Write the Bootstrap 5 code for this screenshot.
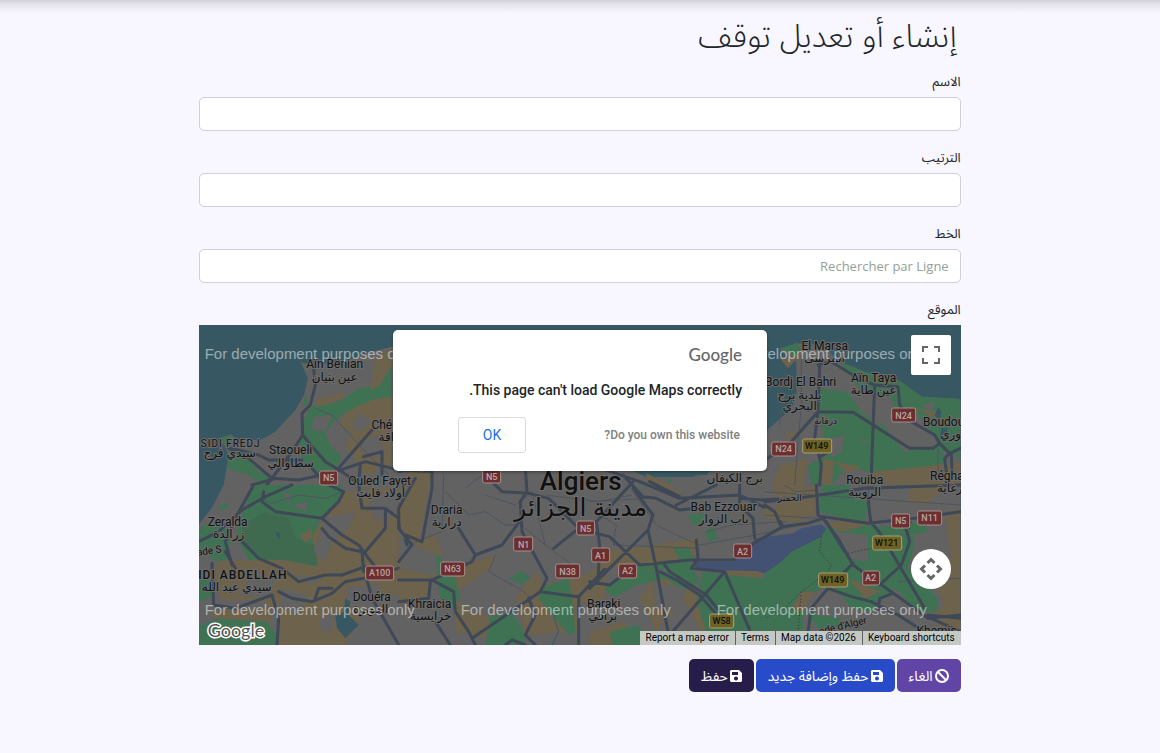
<!DOCTYPE html>
<html lang="ar" dir="rtl">
<head>
<meta charset="utf-8">
<meta name="viewport" content="width=device-width, initial-scale=1">
<title>إنشاء أو تعديل توقف</title>
<link rel="stylesheet" href="https://cdn.jsdelivr.net/npm/bootstrap@5.3.0/dist/css/bootstrap.min.css">
<style>
body{background:#f8f7ff;color:#212529;font-family:"Open Sans","Noto Sans Arabic","DejaVu Sans",sans-serif;font-size:14px;line-height:20px}
.top-shade{height:13px;background:linear-gradient(#d4d3db,#e6e5ed 40%,#f8f7ff)}
.form-row{--bs-gutter-x:12px}
.page-title{font-size:32px;font-weight:300;line-height:44px;margin:0 0 14px;padding:0 4px}
.form-label{display:block;font-size:13px;line-height:20px;margin-bottom:6px}
.form-control{height:34px;font-size:13px;border-color:#ced0dc;border-radius:5px;padding:4px 11px}
.form-control::placeholder{color:#95a099;opacity:1}
.field{margin-bottom:16px}
.map-box{height:320px;background:#375862;font-family:Roboto,"DejaVu Sans",sans-serif}
.map-art{display:block;direction:ltr}
.map-art text{text-anchor:middle}
.town{font-size:12px;fill:#111;stroke:#6c6c6c;stroke-width:2px;paint-order:stroke}
.town-ar{font-size:12px}
.wmark{font:15px "Liberation Sans",sans-serif;fill:#fff;fill-opacity:.5}
.map-art .wmark text,.map-art .logo{text-anchor:start}
.sign rect{stroke:#a98f8f;stroke-width:1;fill:#6b2f30}
.sign text{font-size:9px;font-weight:500;fill:#b9a5a5}
.sign.wil rect{fill:#6e6224;stroke:#a8a07a}
.sign.wil text{fill:#111}
.grn{fill:#3f7253}.dgr{fill:#3f6a50}.brn{fill:#6d624b}.gry{fill:#626262}.sea{fill:#375862}.lake{fill:#435272}
.road{fill:none;stroke:#3f4856;stroke-width:9;stroke-linejoin:round;stroke-linecap:round}
.thin{fill:none;stroke:#4c545f;stroke-width:3;stroke-linejoin:round}
.thin.river{stroke:#355966}
.dots{fill:none;stroke:#383c3c;stroke-width:3;stroke-dasharray:4 6}
.map-alert{width:374px;max-width:96%;height:141px;top:5px;background:#fff;border-radius:5px;padding:14px 25px 16px 65px;box-shadow:0 1px 3px #0006}
.g-logo{font:500 17px/22px Lato,sans-serif;color:#666}
.alert-msg{font-size:14px;font-weight:500;line-height:20px;margin:14px 0 17px;white-space:nowrap}
.own-link{font-size:12px;font-weight:500;color:#808080;padding-right:2px}
.ok-btn{width:68px;height:36px;border:1px solid #dadce0;border-radius:3px;background:#fff;color:#1a73e8;font-size:14px}
.map-ctl{width:40px;height:40px;left:auto;right:10px;background:#fff;border:0}
.ctl-full{top:10px;border-radius:2px}
.ctl-pan{top:224px}
.credits{right:0;bottom:0;direction:ltr;font-size:10px;line-height:14px}
.credits>*{background:#c4c9c4;color:#000;padding:0 6px 0 5px;margin-left:1px}
.actions{gap:2px;margin-top:14px}
.actions .btn{height:33px;font-size:14px;line-height:20px;padding:0 12px;border:0;border-radius:5px;color:#fff;display:flex;align-items:center;gap:2px}
.b-cancel{background:#6045a6!important}.b-more{background:#284bca!important}.b-save{background:#271d4b!important}
</style>
</head>
<body>
<div class="top-shade"></div>
<main class="container-fluid p-0 overflow-hidden pb-5">
<form class="row form-row justify-content-center m-0" onsubmit="return false"><div class="col-8">
<h1 class="page-title">إنشاء أو تعديل توقف</h1>
<div class="field"><label class="form-label" for="name">الاسم</label><input class="form-control" id="name"></div>
<div class="field"><label class="form-label" for="order">الترتيب</label><input class="form-control" id="order"></div>
<div class="field"><label class="form-label" for="line">الخط</label><input class="form-control" id="line" placeholder="Rechercher par Ligne"></div>
<div class="form-label" id="loc">الموقع</div>
<div class="map-box position-relative overflow-hidden" role="group" aria-labelledby="loc">
<svg class="map-art w-100 h-100" viewBox="0 0 762 320" preserveAspectRatio="xMidYMid slice">
<g transform="scale(.33333)">
<!-- land -->
<path class="gry" d="M0 598 40 548 75 480 88 400 84 375 62 340 98 328 115 345 185 345 230 320 290 255 316 210 328 160 306 112 340 120 440 110 500 85 580 65 800 100 1000 300 1343 456 1480 456 1560 430 1700 320 1780 250 1793 200 1793 110 1740 75 1793 55 1870 60 1925 110 2000 140 2100 165 2170 215 2286 222V960H0Z"/>
<!-- north west -->
<path class="grn" d="M580 115 580 215 520 225 440 262 400 295 380 325 395 360 430 400 400 440 350 445 320 420 300 370 310 310 320 270 345 240 380 240 430 225 480 190 530 180 545 130ZM320 205 330 235 312 250ZM62 340 98 328 105 345 85 370ZM88 400 130 370 180 440 230 460 190 480 150 450 84 430Z"/>
<path class="brn" d="M530 105 580 65 580 120 545 180 515 195ZM350 225 430 200 440 215 400 235 355 245ZM520 225 580 215 580 430 540 420 520 455 490 440 460 390 440 370 460 320 420 305 440 262Z"/>
<path class="gry" d="M480 265 520 290 480 320 460 300ZM345 275 400 270 380 320 340 315ZM480 350 540 330 560 390 500 400Z"/>
<path class="thin" d="M350 250 400 270 500 380 570 450"/>
<path class="road" d="M345 130 350 180 335 240 310 265 312 330 345 370 380 410 430 440 470 470M312 330 280 380 220 460 180 510M100 370 180 390 210 405 310 405M90 370 150 400 220 460 300 465 410 440 520 315M225 462 160 480M410 440 500 410 580 430 700 450M495 395 550 380 550 450 M340 430 365 460M480 480 485 415"/>
<!-- south west -->
<g transform="translate(0 480)">
<path class="grn" d="M165 0 430 0 440 60 360 110 340 180 360 240 250 240 150 225 110 150 130 90ZM0 130 40 110 100 140 90 220 60 230 0 200ZM0 270 30 290 40 330 0 355ZM0 420 60 400 200 410 230 440 240 480 0 480ZM265 415 290 420 260 435ZM50 70 95 50 80 75Z"/>
<path class="dgr" d="M130 120 200 80 270 100 290 160 350 180 365 225 320 275 280 250 180 215 135 170Z"/>
<path class="brn" d="M110 225 260 225 360 245 340 150 380 100 440 20 600 0 600 330 520 330 440 480 240 480 240 380 180 345 70 345 40 280 60 230ZM305 150 340 130 340 160 320 175ZM30 380 220 370 220 410 50 400Z"/>
<path class="gry" d="M380 95 470 80 450 130 400 170 380 230 345 200ZM510 50 560 20 600 30 600 90 530 110ZM250 310 330 330 300 390 240 370ZM440 310 540 295 540 380 450 360ZM170 260 230 280 210 340 120 330ZM290 270 370 280 340 300ZM360 410 410 370 400 440 370 440ZM250 20 280 30 270 55ZM280 60 330 50 320 80Z"/>
<path class="sea" d="M440 340 455 350 450 390 480 420 440 460 415 430 410 395 435 380ZM230 140 245 145 240 165Z"/>
<path class="thin" d="M190 40 220 55 300 30 380 40 430 20"/>
<path class="road" d="M280 0 200 35 130 75 60 140 0 170M165 0 115 90 80 170 100 240M195 20 190 50 230 80 370 100 430 150 480 180 540 260 M370 100 420 50 435 20 390 0M370 130 390 155 440 190 490 200 495 260M130 170 180 220 250 250 300 290 380 270 430 270 500 245M240 320 280 340 340 350 400 325 440 290 495 280M40 235 45 360 110 370 220 330 240 400 235 480M80 200 110 250M350 340 360 310 400 310 M505 285 520 340 600 480M480 0 490 70 560 70 560 130 500 200M560 70 600 100 625 180M600 250 540 265"/>
</g>
<!-- centre -->
<g transform="translate(600 420)">
<path class="brn" d="M30 20 100 25 60 240 10 220 0 130ZM60 220 110 205 135 275 50 245ZM0 310 100 330 200 300 290 270 285 300 220 350 180 375 120 360 100 330 85 400 0 420ZM170 400 220 440 280 460 260 520 170 500ZM350 400 410 320 440 360 560 330 620 290 620 400 540 420 540 500 380 510Z"/>
<path class="grn" d="M112 270 130 280 130 320 170 340 185 400 160 430 125 400 115 340ZM330 340 370 318 395 340 370 358ZM425 370 510 340 520 400 530 500 510 510 460 450 420 400ZM275 455 340 440 385 520 370 540 260 540Z"/>
<path class="thin" d="M135 30 130 200 30 240M140 80 210 150 260 140 320 180 350 180M200 70 250 30M290 270 270 320 360 370 400 400M260 90 350 120 400 80 440 240 520 300M380 190 440 240M440 90 600 110 700 90"/>
<path class="road" d="M0 20 50 10 100 20 100 70 70 230 20 210M50 40 0 130 0 190 40 240 0 290M280 50 310 80 390 85 450 100 540 190 465 250M380 10 385 80 365 110 370 200 445 340 425 380 220 520M370 160 310 240 230 270 220 290 100 345 0 345M180 190 230 270M95 350 90 400 0 410M100 345 165 380 170 440 210 500 230 540M110 470 155 540M425 380 540 395 620 310M390 400 410 450 380 510 410 540M540 395 540 540M320 540 340 525 380 540"/>
<path class="thin river" d="M490 430 465 455 480 500 460 540"/>
</g>
<!-- centre east -->
<g transform="translate(1173 420)">
<path class="sea" d="M170 0H380L350 30 240 32Z"/>
<path class="brn" d="M170 25 240 60 290 90 170 50ZM555 60 600 0 640 0 640 170 590 170 550 90ZM40 260 330 220 310 290 150 300 40 310ZM200 330 330 370 400 450 340 510 280 400 200 500 150 400ZM400 310 530 320 510 340 410 340ZM0 500 100 470 150 540 0 540Z"/>
<path class="grn" d="M45 370 150 300 300 290 330 350 280 380 230 340 140 360 70 400ZM250 250 295 250 315 280 270 285ZM295 150 340 145 340 180 310 180ZM345 200 370 185 385 220 360 230ZM230 40 245 45 240 60ZM340 320 410 330 530 340 640 290 640 540 360 540 320 400ZM60 500 140 480 220 540 70 540Z"/>
<path class="gry" d="M190 350 290 370 270 440 200 430ZM160 320 230 310 240 320Z"/>
<path class="lake" d="M310 290 430 290 500 220 650 200 650 300 540 330 500 318 320 315Z"/>
<path class="thin" d="M130 80 200 180 260 210 330 240 500 210 630 180M30 150 80 180 70 240 330 250M350 200 430 180 590 170M0 110 180 100"/>
<path class="road" d="M20 5 150 50 270 100 450 90 530 130 560 150 580 185 500 230 430 285 300 285 150 300 60 215 0 200M100 30 160 95 200 100 270 135 360 125M260 120 380 60M270 95 180 50M450 60 450 120 490 160 495 220M450 100 520 105 600 100M130 50 20 170 30 240 25 350M190 150 175 195 0 370M175 195 200 310 235 500M0 350 60 360 140 300M320 225 325 280 305 310 405 320 480 495M405 320 240 510M225 300 240 320 350 390 390 440M210 320 260 345 330 390 400 470M130 70 190 150"/>
</g>
<!-- north east -->
<g transform="translate(1698 0)">
<path class="grn" d="M45 70 95 55 110 70 95 95ZM180 60 225 110 300 140 400 165 470 215 587 222V400L520 370 510 330 440 290 400 290 380 220 290 200 240 130ZM160 190 240 200 300 230 420 380 530 360 540 420 440 450 330 450 250 420 210 470 140 480 130 420 190 390 170 300Z"/>
<path class="brn" d="M45 100 105 90 70 130ZM50 420 130 400 120 460 80 480 20 480ZM180 400 210 410 200 480 160 480ZM430 430 587 410 587 480 300 480 320 440ZM210 410 290 425 250 445ZM60 325 120 320 80 350ZM450 250 520 260 510 280Z"/>
<path class="gry" d="M250 200 300 190 380 240 400 290 340 300 290 260ZM200 340 240 330 230 380 200 400ZM470 240 510 230 500 260ZM290 345 310 355 295 360ZM360 250 460 270 510 330 430 320Z"/>
<path class="sea" d="M520 245 530 260 525 290 510 270ZM530 310 548 310 545 340 525 335Z"/>
<path class="thin" d="M110 90 110 240 90 480M60 130 45 300M520 370 520 440"/>
<path class="road" d="M160 120 200 110 280 160 330 180 400 185 405 240 440 290 510 330 525 355 505 370 435 370 265 262 160 260 80 350 10 400M165 120 160 260 150 340 170 420 165 480M330 180 325 310 320 450M525 355 555 385 587 370M555 385 540 400 545 440M560 390 562 440M165 395 195 380"/>
</g>
<!-- south east -->
<g transform="translate(1698 480)">
<path class="grn" d="M170 0 250 0 310 60 300 110 240 100 165 80ZM180 130 210 115 440 130 450 180 430 250 520 340 520 380 460 380 390 310 320 380 260 370 200 300 150 320 100 320 60 370 0 400V260L70 200 160 160ZM370 120 480 110 490 140 440 150ZM120 380 180 360 250 420 170 440Z"/>
<path class="brn" d="M0 70 60 60 100 10 160 0 150 90 90 110 0 100ZM440 0 560 0 480 60 430 50ZM540 80 587 70V480L520 430 500 390 540 360 510 300 560 220ZM180 120 250 100 310 120 230 140ZM110 320 150 320 110 380 80 370ZM250 280 350 320 300 340Z"/>
<path class="gry" d="M210 140 310 150 310 230 250 220ZM320 20 400 20 410 90 330 100ZM190 310 240 340 250 400 150 390 140 340Z"/>
<path class="lake" d="M0 180 60 160 110 130 170 118 185 130 170 155 80 200 50 230 0 265Z"/>
<path class="thin" d="M0 90 160 100M60 0 90 20 160 15M400 290 587 280M310 0 315 110M0 20 587 60"/>
<path class="road" d="M0 50 100 40 300 10 587 0M155 0 160 90 175 100 130 115 50 125 30 80 0 60M175 95 310 115 450 100 587 80M175 100 220 160 265 240 380 320 490 400 587 390M185 110 240 200M310 40 318 110 350 150 480 370M420 120 435 170 410 240 345 300M265 235 190 310 140 370 130 440M190 310 260 335 320 350 400 390 480 440M385 325 345 340 340 380M490 390 587 400M500 400 587 440"/>
<path class="dots" d="M170 155 165 200 200 240 190 260 110 320 60 370 0 400M110 320 100 440M250 205 320 190M440 110 430 150"/>
</g>
</g>
<g class="town">
<text x="136" y="43">Aïn Bénian</text><text class="town-ar" x="136" y="56">عين بنيان</text>
<text x="32" y="122" font-size="10" letter-spacing="1">SIDI FREDJ</text><text class="town-ar" x="31" y="132">سيدي فرج</text>
<text x="92" y="129">Staoueli</text><text class="town-ar" x="92" y="142">سطاوالي</text>
<text x="195" y="104">Chéraga</text><text class="town-ar" x="196" y="116">شراقة</text>
<text x="181" y="160">Ouled Fayet</text><text class="town-ar" x="182" y="172">أولاد فايت</text>
<text x="29" y="201">Zeralda</text><text class="town-ar" x="30" y="213">زرالدة</text>
<text x="11" y="229" font-size="10" transform="rotate(-8 11 229)">ade S</text>
<text x="40" y="254" font-weight="500" letter-spacing="1">SIDI ABDELLAH</text><text class="town-ar" x="38" y="266">سيدي عبد الله</text>
<text x="173" y="276">Douéra</text><text class="town-ar" x="172" y="288">الدويرة</text>
<text x="248" y="189">Draria</text><text class="town-ar" x="248" y="201">درارية</text>
<text x="231" y="283">Khraicia</text><text class="town-ar" x="232" y="295">خرايسية</text>
<text x="405" y="283">Baraki</text><text class="town-ar" x="404" y="295">براقي</text>
<text x="382" y="165" font-size="26" font-weight="500">Algiers</text><text x="382" y="191" font-size="25">مدينة الجزائر</text>
<text class="town-ar" x="536" y="157">برج الكيفان</text>
<text x="525" y="186">Bab Ezzouar</text><text class="town-ar" x="525" y="198">باب الزوار</text>
<text x="626" y="25">El Marsa</text><text class="town-ar" x="626" y="37">المرسى</text>
<text x="602" y="61">Bordj El Bahri</text><text class="town-ar" x="601" y="74">بلدية برج</text><text class="town-ar" x="601" y="85">البحري</text>
<text x="675" y="57">Aïn Taya</text><text class="town-ar" x="675" y="69">عين طاية</text>
<text x="627" y="99" font-size="9">درقانة</text><text x="591" y="176" font-size="9">الحميز</text>
<text x="755" y="101">Boudouaou</text><text class="town-ar" x="764" y="113">بودواوري</text>
<text x="666" y="159">Rouiba</text><text class="town-ar" x="666" y="171">الرويبة</text>
<text x="753" y="155">Réghaïa</text><text class="town-ar" x="751" y="167">رغاية</text>
<text x="645" y="304" font-size="10" transform="rotate(-14 645 304)">ade d'Alger</text>
<text x="738" y="310">Khemis</text>
</g>
<g class="sign">
<rect x="121" y="146" width="18" height="14" rx="2"/><text x="130" y="156">N5</text>
<rect x="167" y="241" width="28" height="14" rx="2"/><text x="181" y="251">A100</text>
<rect x="284" y="144" width="18" height="14" rx="2"/><text x="293" y="155">N5</text>
<rect x="315" y="212" width="19" height="14" rx="2"/><text x="325" y="223">N1</text>
<rect x="242" y="237" width="24" height="14" rx="2"/><text x="254" y="247">N63</text>
<rect x="357" y="239" width="24" height="14" rx="2"/><text x="369" y="250">N38</text>
<rect x="378" y="196" width="18" height="14" rx="2"/><text x="387" y="207">N5</text>
<rect x="393" y="223" width="18" height="14" rx="2"/><text x="402" y="234">A1</text>
<rect x="420" y="239" width="18" height="14" rx="2"/><text x="429" y="249">A2</text>
<rect x="535" y="219" width="18" height="14" rx="2"/><text x="544" y="230">A2</text>
<rect x="573" y="117" width="24" height="14" rx="2"/><text x="585" y="127">N24</text>
<rect x="693" y="83" width="24" height="14" rx="2"/><text x="705" y="94">N24</text>
<rect x="693" y="189" width="18" height="14" rx="2"/><text x="702" y="199">N5</text>
<rect x="719" y="186" width="24" height="14" rx="2"/><text x="731" y="196">N11</text>
<rect x="664" y="246" width="17" height="14" rx="2"/><text x="672" y="256">A2</text>
</g>
<g class="sign wil">
<rect x="604" y="114" width="29" height="14" rx="2"/><text x="618" y="124">W149</text>
<rect x="674" y="211" width="29" height="14" rx="2"/><text x="688" y="221">W121</text>
<rect x="620" y="248" width="29" height="14" rx="2"/><text x="634" y="258">W149</text>
<rect x="511" y="289" width="24" height="14" rx="2"/><text x="523" y="299">W58</text>
</g>
<g class="wmark"><text x="6" y="34">For development purposes only</text><text x="518" y="34">For development purposes only</text><text x="6" y="290">For development purposes only</text><text x="262" y="290">For development purposes only</text><text x="518" y="290">For development purposes only</text></g>
<text class="logo" x="9" y="312" font-family="Lato" font-size="18" fill="#555" stroke="#fff" stroke-width="3" paint-order="stroke">Google</text>
</svg>
<div class="map-alert position-absolute start-50 translate-middle-x" role="dialog" aria-label="Google">
<div class="g-logo">Google</div>
<p class="alert-msg">This page can't load Google Maps correctly.</p>
<div class="d-flex justify-content-between align-items-center"><a class="own-link text-decoration-none" href="#">Do you own this website?</a><button type="button" class="ok-btn">OK</button></div>
</div>
<button type="button" class="map-ctl ctl-full position-absolute d-flex align-items-center justify-content-center p-0" aria-label="Fullscreen"><svg width="18" height="18" fill="none" stroke="#666" stroke-width="2"><path d="M1 6V1h5M12 1h5v5M17 12v5h-5M6 17H1v-5"/></svg></button>
<button type="button" class="map-ctl ctl-pan rounded-circle position-absolute d-flex align-items-center justify-content-center p-0" aria-label="Map controls"><svg width="24" height="24" fill="none" stroke="#666" stroke-width="3"><path d="M8.500 6 12 2.500l3.500 3.500M8.500 18 12 21.500l3.500-3.500M6 8.500 2.500 12l3.500 3.500M18 8.500 21.500 12l-3.500 3.500"/></svg></button>
<div class="credits position-absolute d-flex"><a class="text-decoration-none" href="#">Report a map error</a><a class="text-decoration-none" href="#">Terms</a><span>Map data ©2026</span><a class="text-decoration-none" href="#">Keyboard shortcuts</a></div>
</div>
<div class="actions d-flex">
<button type="button" class="btn b-cancel"><svg width="14" height="14" fill="none" stroke="#fff" stroke-width="2"><circle cx="7" cy="7" r="6"/><path d="m3 3 8 8"/></svg>الغاء</button>
<button type="submit" class="btn b-more"><svg width="12" height="12"><path fill="#fff" fill-rule="evenodd" d="M1 0h8l3 3v8l-1 1H1l-1-1V1ZM2 2v3h6V2ZM6 6.500a2 2 0 1 0 .01 0Z"/></svg>حفظ وإضافة جديد</button>
<button type="submit" class="btn b-save"><svg width="12" height="12"><path fill="#fff" fill-rule="evenodd" d="M1 0h8l3 3v8l-1 1H1l-1-1V1ZM2 2v3h6V2ZM6 6.500a2 2 0 1 0 .01 0Z"/></svg>حفظ</button>
</div>
</div></form>
</main>
<script src="https://cdn.jsdelivr.net/npm/bootstrap@5.3.0/dist/js/bootstrap.bundle.min.js"></script>
</body>
</html>
